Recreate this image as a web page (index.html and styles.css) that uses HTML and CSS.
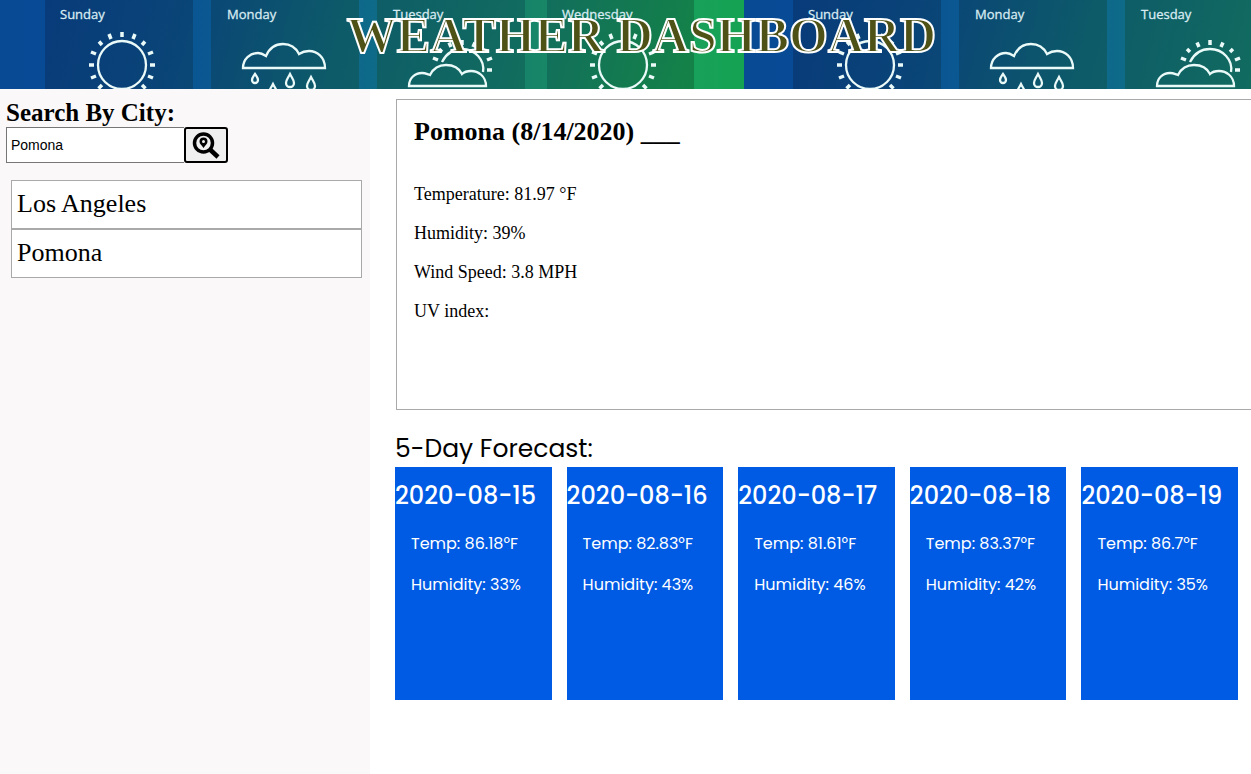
FILE: index.html
```html
<!DOCTYPE html>
<html lang="en">
<head>
<meta charset="utf-8">
<meta name="viewport" content="width=device-width, initial-scale=1">
<title>Weather Dashboard</title>
<link rel="stylesheet" href="styles.css">
</head>
<body>
<header class="banner">
  <svg class="banner-art" aria-hidden="true">
    <defs>
      <linearGradient id="sky" gradientUnits="userSpaceOnUse" x1="0" y1="0" x2="748" y2="0">
        <stop offset="0" stop-color="#084a94"/>
        <stop offset=".12" stop-color="#084b96"/>
        <stop offset=".28" stop-color="#0a5792"/>
        <stop offset=".5" stop-color="#0e6a89"/>
        <stop offset=".72" stop-color="#178568"/>
        <stop offset=".92" stop-color="#18a05c"/>
        <stop offset="1" stop-color="#15a352"/>
      </linearGradient>
      <linearGradient id="panel" gradientUnits="userSpaceOnUse" x1="49" y1="0" x2="680" y2="160">
        <stop offset="0" stop-color="#083b7a"/>
        <stop offset=".22" stop-color="#0a4577"/>
        <stop offset=".45" stop-color="#0d5a69"/>
        <stop offset=".7" stop-color="#116a60"/>
        <stop offset="1" stop-color="#148347"/>
      </linearGradient>
      <g id="sun">
        <circle r="24"/>
        <path id="rays" stroke-width="3.5" d="M0-28V-33M11-26L13-31M20-20L23-23.500M26-11L31-13M28 0H33M26 11L31 13M20 20L23.500 23.500M-11-26L-13-31M-20-20L-23-23.500M-26-11L-31-13M-28 0H-33M-26 11L-31 13M-20 20L-23.500 23.500"/>
      </g>
      <path id="cloud" d="M0 24H82C82 13 74 7 66 7C62 7 59 8 56 10C53 4 47 0 40 0C32 0 26 5 23 12C20 10 18 9 15 9C7 9 0 15 0 24Z"/>
      <path id="drop" d="M0 0C-2 4-4 6-4 9A4 4 0 0 0 4 9C4 6 2 4 0 0Z"/>
      <g id="week">
        <rect width="748" height="89" fill="url(#sky)"/>
        <path fill="url(#panel)" d="M49 0H197V89H49ZM215 0H363V89H215ZM381 0H529V89H381ZM551 0H698V89H551Z"/>
        <g class="day-name">
          <text x="64" y="19">Sunday</text>
          <text x="231" y="19">Monday</text>
          <text x="397" y="19">Tuesday</text>
          <text x="566" y="19">Wednesday</text>
        </g>
        <g class="weather-line">
          <use href="#sun" x="126" y="65"/>
          <use href="#cloud" x="247" y="44"/>
          <use href="#drop" x="277" y="84"/>
          <use href="#drop" x="294" y="74"/>
          <use href="#drop" x="315" y="77"/>
          <path d="M259 74C257 77 256 78 256 80A3 3 0 0 0 262 80C262 78 261 77 259 74Z"/>
          <path d="M446 62C450 54 457 49 466 49C479 49 489 60 487 72"/>
          <path stroke-width="3.500" d="M466 45V40M477 47L479 42.500M455 47L453 42.500M486 52L489 49M446 52L443 49M491 60L496 58M442 60L437 58M491 70H496"/>
          <path d="M413 86H490C490 76 482 71 475 71C471 71 468 72 466 74C463 68 457 65 450 65C443 65 437 69 434 75C431 74 429 73 426 73C419 73 413 78 413 86Z"/>
          <use href="#sun" x="627" y="65"/>
        </g>
      </g>
    </defs>
    <use href="#week" x="-4"/>
    <use href="#week" x="744"/>
    <use href="#week" x="1492"/>
  </svg>
  <h1 class="banner-title">WEATHER DASHBOARD</h1>
</header>
<div class="layout">
  <aside class="sidebar">
    <form class="search" onsubmit="return false">
      <label class="search-label" for="city">Search By City:</label>
      <div class="search-row">
        <input class="search-input" id="city" type="text" value="Pomona">
        <button class="search-button" type="submit" aria-label="Search">
          <svg class="search-icon" viewBox="0 0 28 28" aria-hidden="true">
            <circle cx="11.500" cy="12" r="9" fill="none" stroke="#000" stroke-width="3.500"/>
            <path d="M18 18.500L26 26" stroke="#000" stroke-width="4.500"/>
            <path fill-rule="evenodd" d="M11.500 17C9.500 14 7.500 13 7.500 10.500A4 4 0 0 1 15.500 10.500C15.500 13 13.500 14 11.500 17ZM11.500 9A1.500 1.500 0 1 0 11.500 12A1.500 1.500 0 1 0 11.500 9Z"/>
          </svg>
        </button>
      </div>
    </form>
    <ul class="history">
      <li class="history-item">Los Angeles</li>
      <li class="history-item">Pomona</li>
    </ul>
  </aside>
  <main class="content">
    <section class="current">
      <h2 class="current-title">Pomona (8/14/2020) ___</h2>
      <p class="reading">Temperature: 81.97 °F</p>
      <p class="reading">Humidity: 39%</p>
      <p class="reading">Wind Speed: 3.8 MPH</p>
      <p class="reading">UV index:</p>
    </section>
    <section class="forecast">
      <h2 class="forecast-title">5-Day Forecast:</h2>
      <div class="days">
        <article class="day"><h3 class="day-date">2020-08-15</h3><p class="day-reading">Temp: 86.18°F</p><p class="day-reading">Humidity: 33%</p></article>
        <article class="day"><h3 class="day-date">2020-08-16</h3><p class="day-reading">Temp: 82.83°F</p><p class="day-reading">Humidity: 43%</p></article>
        <article class="day"><h3 class="day-date">2020-08-17</h3><p class="day-reading">Temp: 81.61°F</p><p class="day-reading">Humidity: 46%</p></article>
        <article class="day"><h3 class="day-date">2020-08-18</h3><p class="day-reading">Temp: 83.37°F</p><p class="day-reading">Humidity: 42%</p></article>
        <article class="day"><h3 class="day-date">2020-08-19</h3><p class="day-reading">Temp: 86.7°F</p><p class="day-reading">Humidity: 35%</p></article>
      </div>
    </section>
  </main>
</div>
</body>
</html>
```
FILE: styles.css
```css
* { box-sizing: border-box; }
body {
  margin: 0;
  min-height: 100vh;
  display: flex;
  flex-direction: column;
  background: #fff;
  color: #000;
  font-family: "Liberation Serif", "Times New Roman", serif;
}
h1, h2, h3, p, ul { margin: 0; padding: 0; }

.banner {
  position: relative;
  height: 89px;
  padding: 8px 0 0 32px;
  overflow: hidden;
}
.banner-art {
  position: absolute;
  inset: 0;
  width: 100%;
  height: 100%;
}
.day-name {
  fill: #d8ebf2;
  font: 13px "Open Sans", sans-serif;
  stroke: #d8ebf2;
  stroke-width: .3px;
}
.weather-line {
  fill: none;
  stroke: #eafaf8;
  stroke-width: 2.3;
}
.banner-title {
  position: relative;
  text-align: center;
  font-size: 50px;
  line-height: 54px;
  color: #4f5216;
  -webkit-text-stroke: 2px #fff;
}

.layout {
  flex: 1;
  display: grid;
  grid-template-columns: 370px 1fr;
}
.sidebar {
  padding: 10px 8px 10px 6px;
  background: #faf8f9;
}
.search-label {
  display: block;
  font-size: 25px;
  line-height: 28px;
  font-weight: bold;
}
.search-row { display: flex; }
.search-input {
  width: 178px;
  height: 36px;
  padding: 0 4px;
  border: 1px solid #767676;
  border-right: 0;
  background: #fff;
  font: 14px "Liberation Sans", Arial, sans-serif;
}
.search-button {
  display: flex;
  align-items: center;
  justify-content: center;
  width: 44px;
  height: 36px;
  padding: 0;
  border: 2px solid #000;
  border-radius: 3px;
  background: #efefef;
}
.search-icon { width: 28px; height: 28px; }
.history {
  margin: 17px 0 0 5px;
  list-style: none;
}
.history-item {
  padding: 7px 5px 9px;
  border: 1px solid #a9a9a9;
  background: #fff;
  font-size: 26px;
  line-height: 31px;
}

.content {
  min-width: 0;
  padding: 10px 0 0 25px;
}
.current {
  min-height: 311px;
  margin-left: 1px;
  padding: 17px;
  border: 1px solid #a9a9a9;
  border-right: 0;
}
.current-title {
  margin-bottom: 37px;
  font-size: 26px;
  line-height: 30px;
}
.reading {
  margin-bottom: 18px;
  font-size: 18px;
  line-height: 21px;
}
.forecast {
  padding: 22px 13px 0 0;
  font-family: Poppins, Inter, sans-serif;
}
.forecast-title {
  padding-bottom: 2px;
  font-size: 25px;
  line-height: 33px;
  font-weight: 400;
}
.days {
  display: grid;
  grid-template-columns: repeat(5, 1fr);
  gap: 15px;
}
.day {
  min-height: 233px;
  padding-top: 12px;
  background: #005be4;
  color: #fff;
}
.day-date {
  margin-bottom: 17px;
  font-size: 24px;
  line-height: 34px;
  font-weight: 500;
}
.day-reading {
  padding: 2px 16px 15px;
  font-size: 16px;
  line-height: 24px;
  font-weight: 400;
}
```
